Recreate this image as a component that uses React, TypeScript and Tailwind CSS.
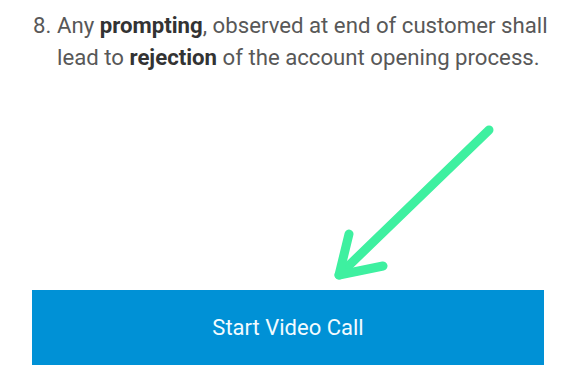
export default function App() {
  return (
    <div className="relative w-[576px] h-[382px] bg-white overflow-hidden" style={{ fontFamily: "Roboto, 'Liberation Sans', sans-serif" }}>
      <div className="pl-[33px] pr-[10px] pt-[9px] text-[22.2px] leading-[32px] text-[#585858]">
        <p className="flex">
          <span className="w-[24px] shrink-0">8.</span>
          <span>
            Any <b className="font-bold text-[#333333]">prompting</b>, observed at end of customer shall lead to{" "}
            <b className="font-bold text-[#333333]">rejection</b> of the account opening process.
          </span>
        </p>
      </div>

      <svg className="absolute left-0 top-0" width="576" height="382" viewBox="0 0 576 382">
        <g stroke="#3ef0a0" strokeWidth="9" strokeLinecap="round" strokeLinejoin="round" fill="none">
          <path d="M489 130 L339 275" />
          <path d="M349 234 L339 275 L383 266" />
        </g>
      </svg>

      <div className="absolute left-[32px] top-[290px] w-[512px] h-[75px] bg-[#0091d6] flex items-center justify-center">
        <span className="text-[#f2fbff] text-[22px]">Start Video Call</span>
      </div>
    </div>
  );
}
